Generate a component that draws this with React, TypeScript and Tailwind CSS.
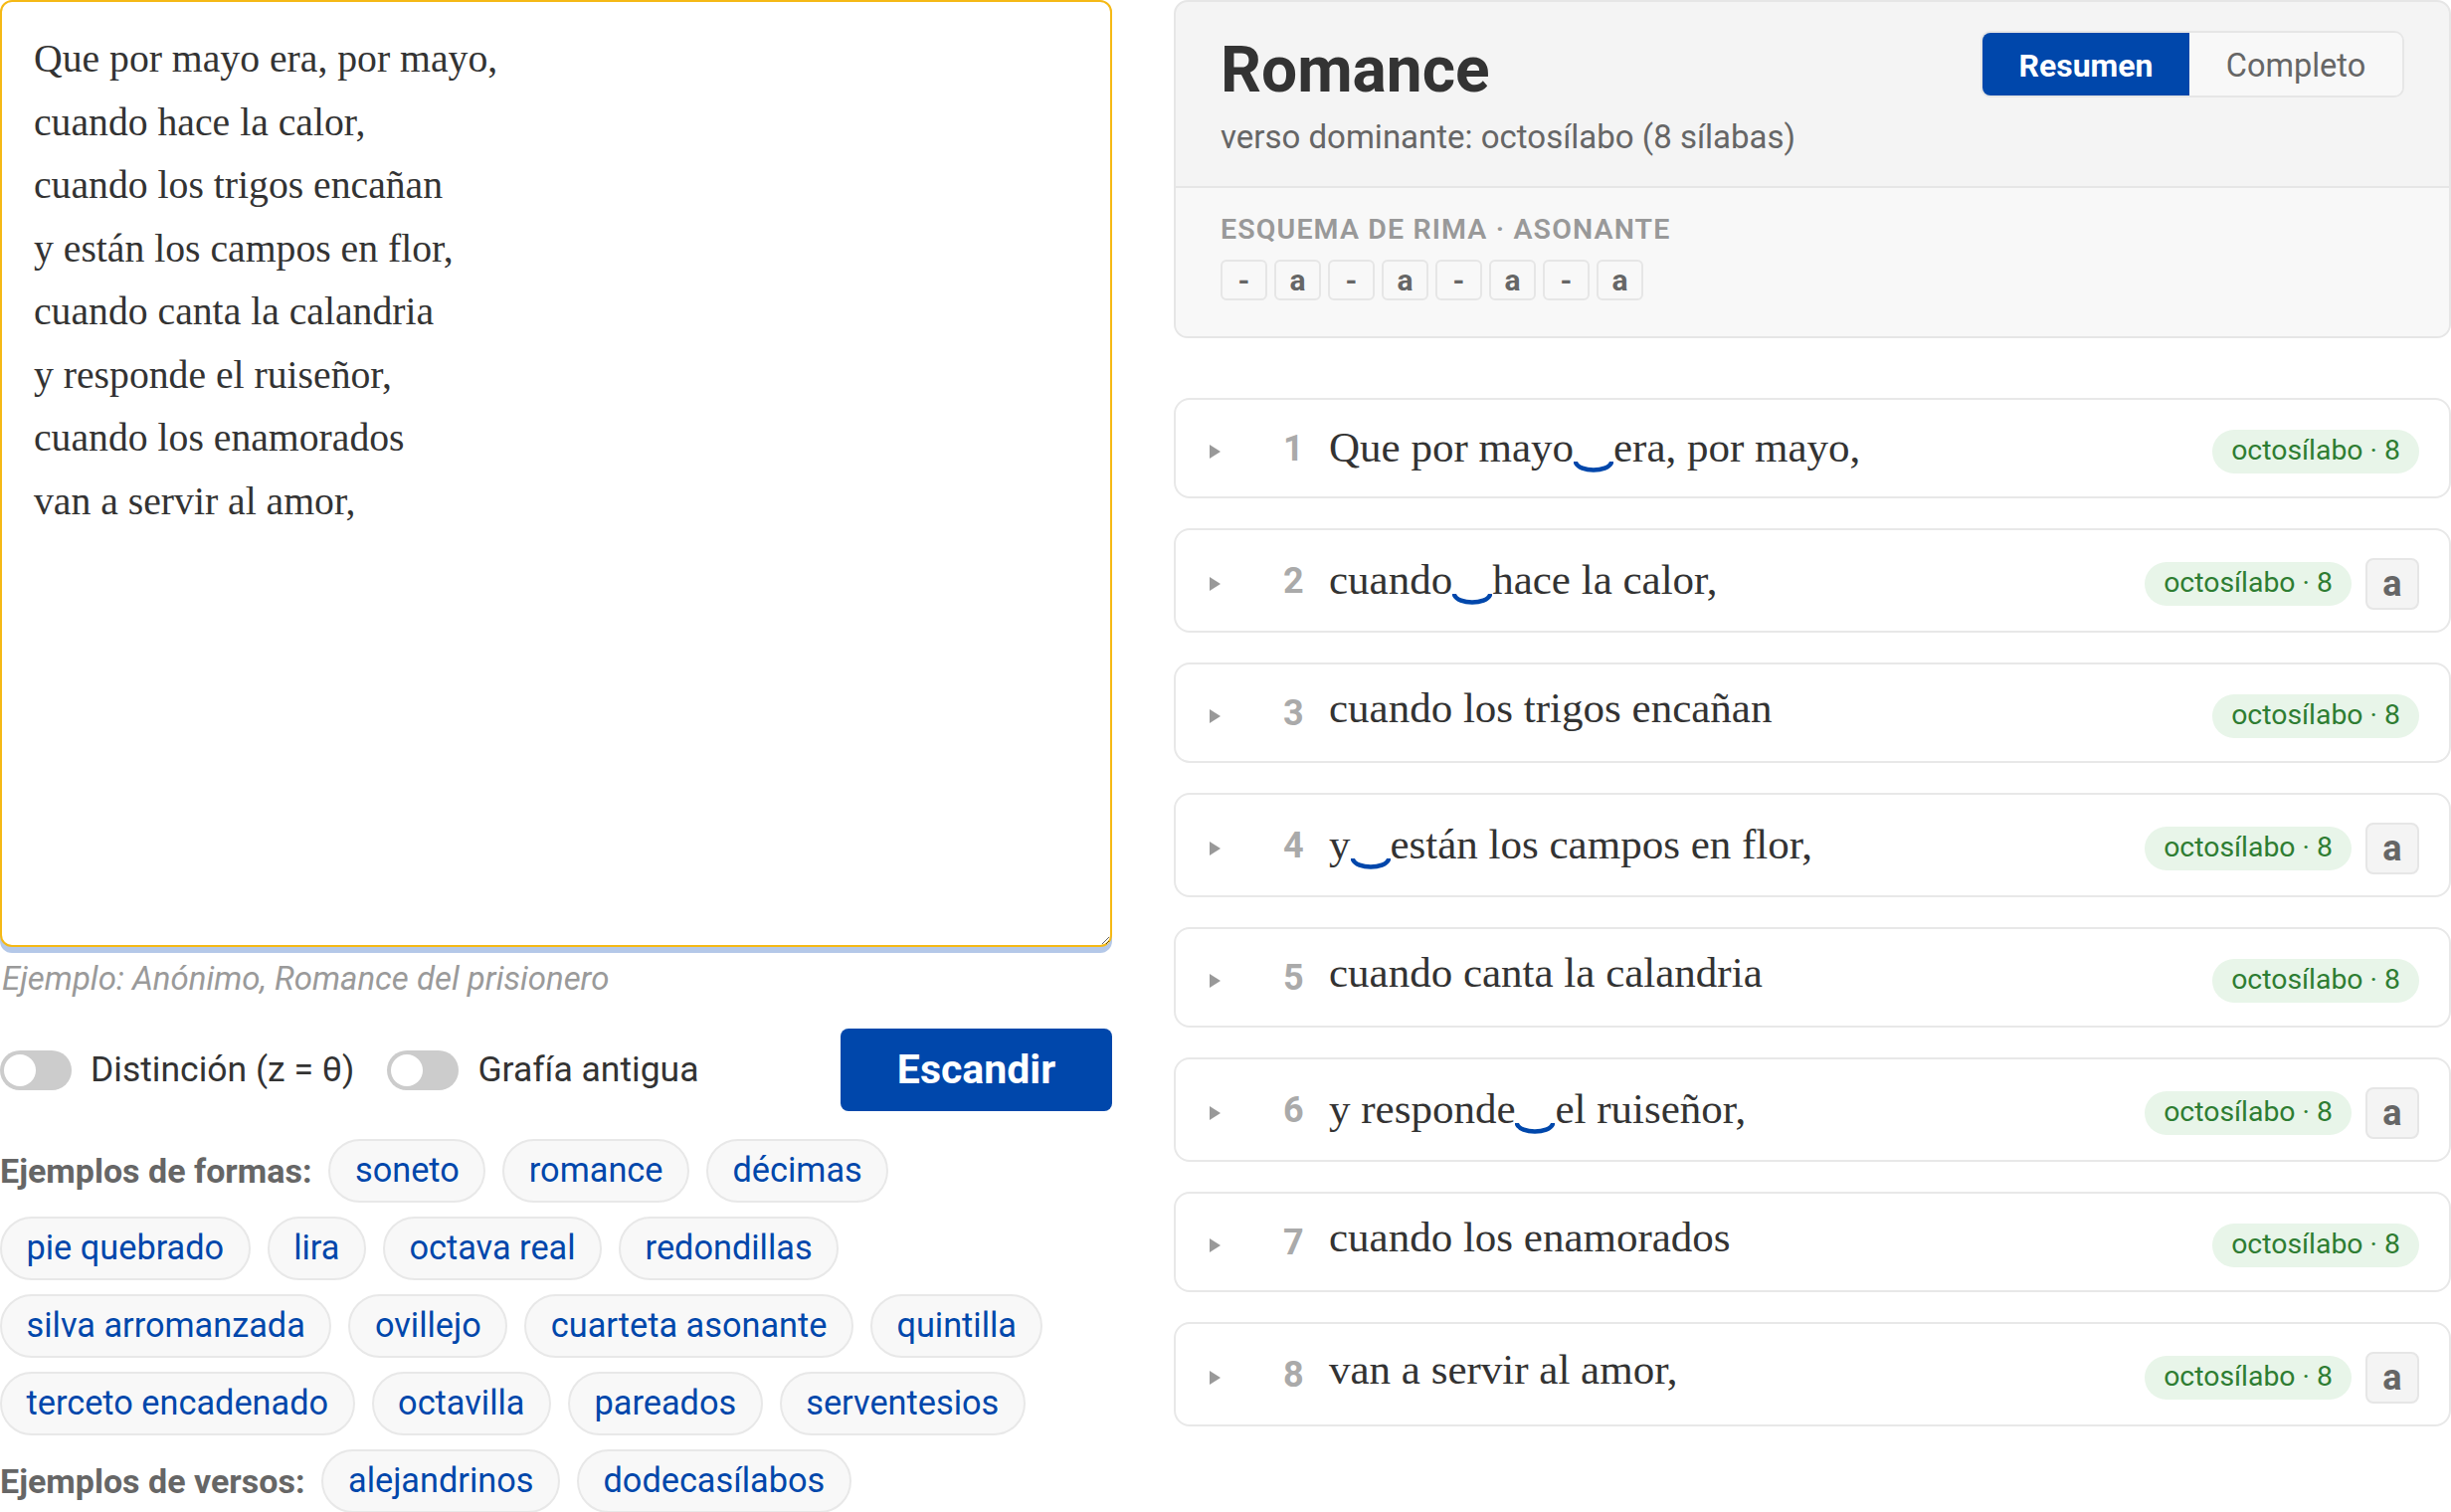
import React from 'react';

type Verse = {
  n: number;
  parts: string[]; // parts joined by a synalepha tie
  rhyme?: string;
};

const poem = `Que por mayo era, por mayo,
cuando hace la calor,
cuando los trigos encañan
y están los campos en flor,
cuando canta la calandria
y responde el ruiseñor,
cuando los enamorados
van a servir al amor,`;

const verses: Verse[] = [
  { n: 1, parts: ['Que por mayo', 'era, por mayo,'] },
  { n: 2, parts: ['cuando', 'hace la calor,'], rhyme: 'a' },
  { n: 3, parts: ['cuando los trigos encañan'] },
  { n: 4, parts: ['y', 'están los campos en flor,'], rhyme: 'a' },
  { n: 5, parts: ['cuando canta la calandria'] },
  { n: 6, parts: ['y responde', 'el ruiseñor,'], rhyme: 'a' },
  { n: 7, parts: ['cuando los enamorados'] },
  { n: 8, parts: ['van a servir al amor,'], rhyme: 'a' },
];

const scheme = ['-', 'a', '-', 'a', '-', 'a', '-', 'a'];

const formas = [
  'soneto', 'romance', 'décimas', 'pie quebrado', 'lira', 'octava real', 'redondillas',
  'silva arromanzada', 'ovillejo', 'cuarteta asonante', 'quintilla',
  'terceto encadenado', 'octavilla', 'pareados', 'serventesios',
];

const versos = ['alejandrinos', 'dodecasílabos'];

const Toggle: React.FC<{ label: string }> = ({ label }) => (
  <label className="flex items-center gap-[19px]">
    <span className="w-[72px] h-[40px] rounded-full bg-[#cccccc] p-[4px] flex items-center">
      <span className="w-[32px] h-[32px] rounded-full bg-white" />
    </span>
    <span className="text-[35.5px] text-[#333333]">{label}</span>
  </label>
);

const Chip: React.FC<{ text: string }> = ({ text }) => (
  <button className="h-[64px] px-[24.5px] rounded-full border-2 border-[#e8e8e8] bg-[#f8f8f8] text-[34.3px] text-[#0047ab]">
    {text}
  </button>
);

const Tie = () => (
  <span className="inline-block w-[40px] h-[1em] relative align-baseline">
    <svg className="absolute left-0 bottom-[-12px]" width="40" height="12" viewBox="0 0 40 12">
      <path d="M2 1 C 6 11, 34 11, 38 1" fill="none" stroke="#0047ab" strokeWidth="4.5" strokeLinecap="round" />
    </svg>
  </span>
);

const VerseRow: React.FC<{ v: Verse }> = ({ v }) => (
  <div
    className={
      'flex items-center border-2 border-[#e8e8e8] rounded-[16px] bg-white pl-[32px] pr-[30px] ' +
      (v.rhyme ? 'h-[105px]' : 'h-[101px]')
    }
  >
    <svg width="14" height="14" viewBox="0 0 14 14" className="mt-[6px]">
      <path d="M2 0 L13 7 L2 14 Z" fill="#999999" />
    </svg>
    <span className="ml-[62px] text-[36px] leading-none font-bold text-[#aaaaaa] w-[22px]">{v.n}</span>
    <span className="ml-[24px] -mt-[10px] font-['Liberation_Serif',serif] text-[43px] leading-none text-[#333333] whitespace-nowrap">
      {v.parts.map((p, i) => (
        <React.Fragment key={i}>
          {i > 0 && <Tie />}
          {p}
        </React.Fragment>
      ))}
    </span>
    <div className="ml-auto mt-[6px] flex items-center gap-[14px]">
      <span className="h-[44px] px-[19px] rounded-full bg-[#e8f5e9] text-[#2e7d32] text-[28.4px] flex items-center">
        octosílabo · 8
      </span>
      {v.rhyme && (
        <span className="w-[54px] h-[52px] rounded-[8px] border-2 border-[#e6e6e6] bg-[#f4f4f4] text-[36px] font-bold text-[#666666] flex items-center justify-center">
          {v.rhyme}
        </span>
      )}
    </div>
  </div>
);

export default function App() {
  return (
    <div className="w-[2464px] h-[1520px] overflow-hidden bg-white flex gap-[62px] font-['Roboto',sans-serif] text-[#333333]">
      {/* left: editor */}
      <div className="w-[1118px] shrink-0 flex flex-col">
        <textarea
          readOnly
          value={poem}
          className="shrink-0 w-full h-[952px] rounded-[12px] border-2 border-[#f5b915] bg-white pt-[26px] px-[32px] font-['Liberation_Serif',serif] text-[39.7px] leading-[63.5px] text-[#333333] outline-none shadow-[0_6px_0_0_#b4c8e8]"
        />
        <p className="mt-[12px] italic text-[33px] leading-[40px] text-[#9a9a9a] pl-[2px]">Ejemplo: Anónimo, Romance del prisionero</p>
        <div className="mt-[30px] flex items-center gap-[33px]">
          <Toggle label="Distinción (z = θ)" />
          <Toggle label="Grafía antigua" />
          <button className="ml-auto w-[273px] h-[83px] rounded-[8px] bg-[#0047ab] text-white text-[41px] font-bold">
            Escandir
          </button>
        </div>
        <div className="mt-[28px] flex flex-wrap items-center gap-x-[17px] gap-y-[14px]">
          <span className="text-[34px] font-bold text-[#666666]">Ejemplos de formas:</span>
          {formas.map(f => <Chip key={f} text={f} />)}
        </div>
        <div className="mt-[14px] flex flex-wrap items-center gap-x-[17px] gap-y-[14px]">
          <span className="text-[34px] font-bold text-[#666666]">Ejemplos de versos:</span>
          {versos.map(f => <Chip key={f} text={f} />)}
        </div>
      </div>

      {/* right: results */}
      <div className="flex-1 flex flex-col">
        <div className="border-2 border-[#e6e6e6] rounded-[14px] bg-[#f4f4f4] overflow-hidden">
          <div className="flex items-start justify-between pt-[29px] px-[45px] pb-[29px] border-b-2 border-[#e6e6e6]">
            <div>
              <h1 className="text-[64px] leading-[80px] font-bold text-[#333333]">Romance</h1>
              <p className="mt-[7px] text-[33px] leading-[40px] text-[#666666]">verso dominante: octosílabo (8 sílabas)</p>
            </div>
            <div className="flex h-[67px] rounded-[10px] border-2 border-[#e6e6e6] overflow-hidden">
              <button className="w-[208px] pt-[3px] bg-[#0047ab] text-white text-[32px] font-bold">Resumen</button>
              <button className="w-[214px] pt-[3px] bg-[#f8f8f8] text-[#666666] text-[32.5px]">Completo</button>
            </div>
          </div>
          <div className="bg-[#f8f8f8] px-[45px] pt-[26px] pb-[36px]">
            <div className="text-[28.5px] leading-[32px] font-semibold tracking-[0.04em] text-[#999999]">ESQUEMA DE RIMA · ASONANTE</div>
            <div className="mt-[14px] flex gap-[7px]">
              {scheme.map((s, i) => (
                <span key={i} className="w-[47px] h-[41px] rounded-[6px] border-2 border-[#e6e6e6] bg-[#f8f8f8] flex items-center justify-center text-[30px] font-bold text-[#666666]">
                  {s}
                </span>
              ))}
            </div>
          </div>
        </div>
        <div className="mt-[60px] flex flex-col gap-[30px]">
          {verses.map(v => <VerseRow key={v.n} v={v} />)}
        </div>
      </div>
    </div>
  );
}
